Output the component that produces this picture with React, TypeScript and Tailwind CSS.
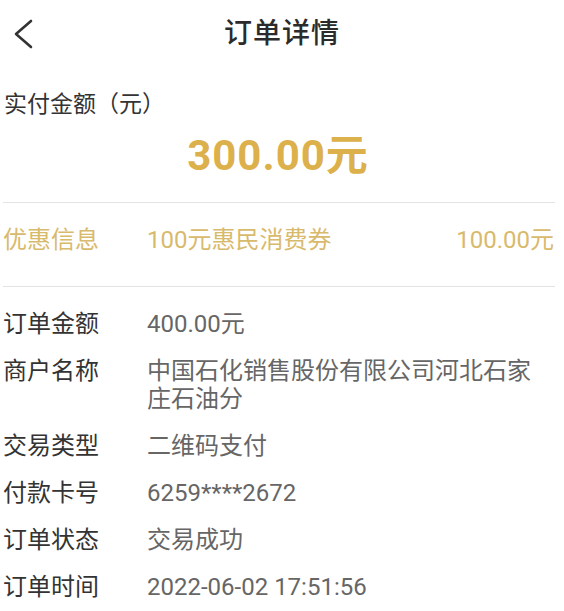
const rows: { label: string; value: string }[] = [
  { label: '订单金额', value: '400.00元' },
  { label: '商户名称', value: '中国石化销售股份有限公司河北石家庄石油分' },
  { label: '交易类型', value: '二维码支付' },
  { label: '付款卡号', value: '6259****2672' },
  { label: '订单状态', value: '交易成功' },
  { label: '订单时间', value: '2022-06-02 17:51:56' },
];

export default function App() {
  return (
    <div className="w-[564px] min-h-[611px] bg-white font-['Roboto','Noto_Sans_CJK_SC',sans-serif] text-[#333]">
      {/* header */}
      <div className="grid h-[68px] grid-cols-[1fr_auto_1fr] items-center">
        <div className="pl-[11px]">
          <svg width="24" height="32" viewBox="0 0 24 32" fill="none">
            <polyline
              points="20,3 5,16 20,29"
              stroke="#333"
              strokeWidth="2.6"
              strokeLinecap="round"
              strokeLinejoin="round"
            />
          </svg>
        </div>
        <h1 className="text-[28px] font-medium leading-[30px] tracking-[1px] text-[#2b2b2b]">订单详情</h1>
        <div />
      </div>

      <div className="mt-[22px] pl-[4px] text-[23px] leading-[30px]">实付金额（元）</div>

      <div className="mt-[11px] pr-[8px] text-center text-[42px] font-bold leading-[50px] tracking-[1px] text-[#dcb04b]">
        300.00元
      </div>

      <div className="ml-[3px] mr-[9px] mt-[21px] border-t border-[#e3e3e3]" />

      <div className="flex pb-[31px] pl-[3px] pr-[10px] pt-[22px] text-[24px] leading-[30px] text-[#d8ba6c]">
        <div className="w-[144px] shrink-0">优惠信息</div>
        <div className="flex-1">100元惠民消费券</div>
        <div>100.00元</div>
      </div>

      <div className="ml-[3px] mr-[9px] border-t border-[#e3e3e3]" />

      <div className="flex flex-col gap-[19px] pl-[3px] pr-[20px] pt-[23px] text-[24px] leading-[28px]">
        {rows.map((r) => (
          <div key={r.label} className="flex">
            <div className="w-[144px] shrink-0">{r.label}</div>
            <div className="flex-1 text-[#666]">{r.value}</div>
          </div>
        ))}
      </div>
    </div>
  );
}
